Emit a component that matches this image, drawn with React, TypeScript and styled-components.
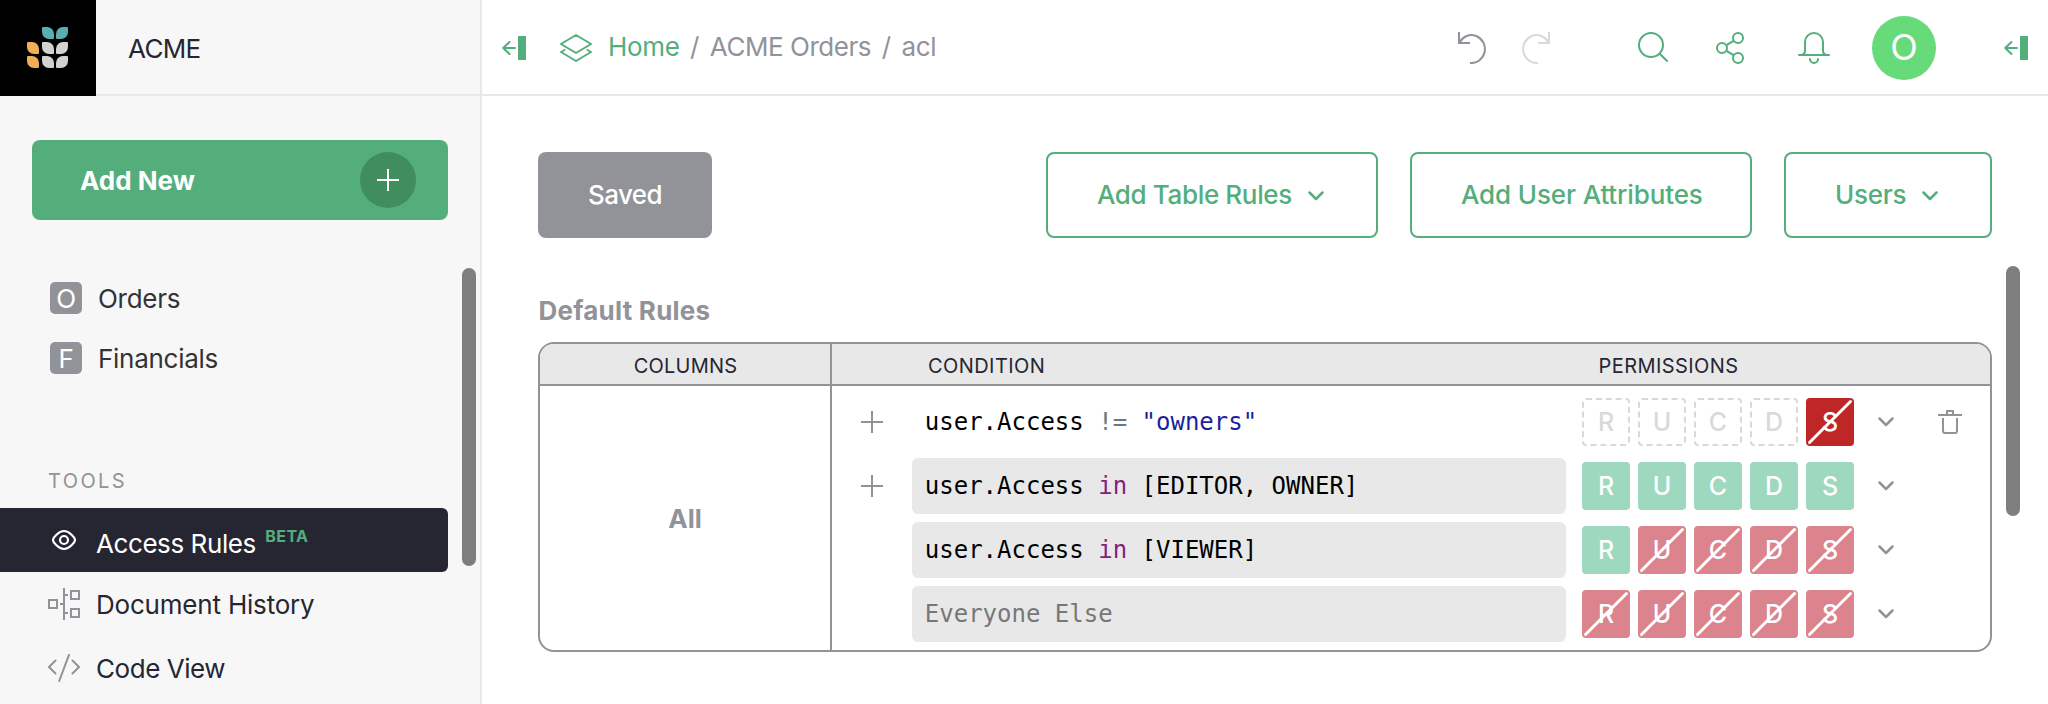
import React from "react";
import styled, { createGlobalStyle } from "styled-components";

const c = {
  green: "#53ae7c",
  greenDark: "#408d5d",
  dark: "#262633",
  slate: "#929299",
  line: "#e8e8e8",
  disabled: "#d9d9d9",
  thumb: "#7e7e7e",
};

const GlobalStyle = createGlobalStyle`
  * { box-sizing: border-box; }
  body { margin: 0; background: #fff; color: ${c.dark}; font: 26px Inter, "Liberation Sans", sans-serif; }
`;

const Page = styled.div`
  display: flex;
  width: 2048px;
  height: 704px;
  overflow: hidden;
`;

/* ---------- sidebar ---------- */

const Sidebar = styled.aside`
  display: flex;
  flex-direction: column;
  width: 482px;
  flex: none;
  background: #f7f7f7;
  border-right: 2px solid ${c.line};
`;

const SidebarHeader = styled.div`
  display: flex;
  height: 96px;
  flex: none;
`;

const LogoBox = styled.div`
  display: flex;
  align-items: center;
  justify-content: center;
  width: 96px;
  background: #000;
`;

const LogoGrid = styled.div`
  display: grid;
  grid-template: repeat(3, 12px) / repeat(3, 12px);
  gap: 2.5px;
  margin-right: 1px;
  margin-bottom: 1px;
`;

const Petal = styled.i<{ $color: string; $flip?: boolean }>`
  background: ${(p) => p.$color};
  border-radius: ${(p) => (p.$flip ? "7px 1px 7px 1px" : "1px 7px 1px 7px")};
`;

const OrgName = styled.div`
  flex: 1;
  padding: 3px 0 0 32px;
  line-height: 91px;
  letter-spacing: -0.65px;
  border-bottom: 2px solid ${c.line};
`;

const AddNewButton = styled.button`
  display: flex;
  align-items: center;
  justify-content: space-between;
  width: 416px;
  height: 80px;
  margin: 44px 0 48px 32px;
  padding: 0 32px 0 48px;
  flex: none;
  border: 0;
  border-radius: 8px;
  background: ${c.green};
  color: #fff;
  font: bold 26px Inter, sans-serif;
  letter-spacing: 0;
`;

const AddCircle = styled.span`
  display: flex;
  align-items: center;
  justify-content: center;
  width: 56px;
  height: 56px;
  border-radius: 50%;
  background: ${c.greenDark};
`;

const SidebarBody = styled.div`
  display: flex;
  flex: 1;
  justify-content: space-between;
  min-height: 0;
`;

const SidebarList = styled.nav`
  width: 448px;
`;

const ScrollThumb = styled.div<{ $height: number }>`
  width: 14px;
  height: ${(p) => p.$height}px;
  border-radius: 7px;
  background: ${c.thumb};
`;

const SidebarThumb = styled(ScrollThumb)`
  margin-right: 4px;
`;

const PageRow = styled.div`
  display: flex;
  align-items: center;
  gap: 16px;
  height: 60px;
  padding-left: 50px;
  color: #333;
  letter-spacing: -0.27px;
`;

const PageLabel = styled.span`
  padding-top: 1px;
`;

const PageBadge = styled.span`
  width: 32px;
  height: 32px;
  border-radius: 5px;
  background: ${c.slate};
  color: #fff;
  line-height: 33px;
  text-align: center;
`;

const SectionTitle = styled.div`
  margin: 80px 0 14px;
  padding-left: 48px;
  font-size: 20px;
  line-height: 26px;
  letter-spacing: 2.4px;
  color: ${c.slate};
`;

const ToolRow = styled.div<{ $active?: boolean }>`
  display: flex;
  align-items: center;
  gap: 16px;
  height: 64px;
  padding-left: 48px;
  border-radius: 0 6px 6px 0;
  background: ${(p) => (p.$active ? c.dark : "transparent")};
  color: ${(p) => (p.$active ? "#fff" : c.dark)};
  svg { color: ${(p) => (p.$active ? "#fff" : c.slate)}; }
`;

const ToolLabel = styled.span<{ $spacing: number; $drop?: number }>`
  letter-spacing: ${(p) => p.$spacing}px;
  padding-top: ${(p) => p.$drop ?? 0}px;
`;

const BetaTag = styled.span`
  margin-left: 9.5px;
  color: ${c.green};
  font-size: 16px;
  font-weight: 700;
  letter-spacing: 0.4px;
  line-height: 0;
  vertical-align: 11px;
`;

/* ---------- main area ---------- */

const Main = styled.main`
  display: flex;
  flex-direction: column;
  flex: 1;
  min-width: 0;
`;

const TopBar = styled.header`
  display: flex;
  align-items: center;
  height: 96px;
  flex: none;
  padding: 2px 20px 0 20px;
  border-bottom: 2px solid ${c.line};
  color: ${c.green};
`;

const Breadcrumbs = styled.div`
  display: flex;
  flex: 1;
  margin-left: 16px;
  padding-bottom: 3px;
  white-space: nowrap;
  color: ${c.slate};
`;

const Crumb = styled.span<{ $link?: boolean; $spacing: number }>`
  color: ${(p) => (p.$link ? c.green : c.slate)};
  letter-spacing: ${(p) => p.$spacing}px;
`;

const Slash = styled.span`
  margin: 0 10.4px 0 10.6px;
`;

const IconSlot = styled.span<{ $left: number; $color?: string }>`
  display: flex;
  margin-left: ${(p) => p.$left}px;
  color: ${(p) => p.$color ?? "inherit"};
`;

const Avatar = styled.div`
  width: 64px;
  height: 64px;
  margin: 0 68px 0 42px;
  border-radius: 50%;
  background: #67da79;
  color: #fff;
  font-size: 36px;
  line-height: 63px;
  text-align: center;
`;

const Content = styled.div`
  display: flex;
  flex-direction: column;
  padding: 56px 28px 0 56px;
`;

const ButtonBar = styled.div`
  display: flex;
  gap: 32px;
  margin-right: 28px;
`;

const OutlineButton = styled.button<{ $width: number; $spacing: number }>`
  display: flex;
  align-items: center;
  justify-content: space-between;
  width: ${(p) => p.$width}px;
  height: 86px;
  padding: 0 0 1px 49px;
  border: 2px solid ${c.green};
  border-radius: 8px;
  background: #fff;
  color: ${c.green};
  font: 500 26px Inter, sans-serif;
  letter-spacing: ${(p) => p.$spacing}px;
  white-space: nowrap;
  svg { margin: 3px 52px 0 0; }
`;

const SavedButton = styled.button`
  width: 174px;
  height: 86px;
  margin-right: auto;
  padding-bottom: 2px;
  border: 0;
  border-radius: 8px;
  background: ${c.slate};
  color: #fff;
  font: 500 26px Inter, sans-serif;
  letter-spacing: -0.54px;
`;

const RulesArea = styled.div`
  display: flex;
  justify-content: space-between;
  margin-top: 28px;
`;

const RulesColumn = styled.section`
  width: 1454px;
`;

const RulesTitle = styled.h2`
  margin: 29px 0 15px;
  padding-left: 0.5px;
  font-size: 26px;
  line-height: 32px;
  font-weight: bold;
  letter-spacing: 0.23px;
  color: ${c.slate};
`;

const RulesTable = styled.div`
  display: grid;
  grid-template-columns: 292px 1fr;
  grid-template-rows: 42px 264px;
  height: 310px;
  border: 2px solid ${c.slate};
  border-radius: 16px;
  overflow: hidden;
`;

const HeadCell = styled.div`
  display: flex;
  align-items: center;
  padding-top: 3px;
  background: #e8e8e8;
  border-bottom: 2px solid ${c.slate};
  font-size: 20px;
  letter-spacing: 0.42px;
`;

const ColumnsHead = styled(HeadCell)`
  justify-content: center;
  padding-left: 1px;
  border-right: 2px solid ${c.slate};
  letter-spacing: 0.2px;
`;

const ConditionHead = styled.span`
  width: 670.5px;
  margin-left: 96px;
`;

const AllCell = styled.div`
  display: flex;
  align-items: center;
  justify-content: center;
  border-right: 2px solid ${c.slate};
  color: ${c.slate};
  font-weight: bold;
`;

const RuleList = styled.div`
  padding-top: 4px;
`;

const RuleRow = styled.div`
  display: flex;
  align-items: center;
  height: 64px;
`;

const AddSlot = styled.span`
  display: flex;
  justify-content: center;
  width: 80px;
  color: ${c.slate};
`;

const Formula = styled.div<{ $readonly?: boolean; $muted?: boolean }>`
  width: 654px;
  height: 56px;
  margin-right: 16px;
  padding-left: 12.8px;
  border-radius: 6px;
  background: ${(p) => (p.$readonly ? "#e8e8e8" : "transparent")};
  color: ${(p) => (p.$muted ? "#777" : "#000")};
  font: 24px/56px "DejaVu Sans Mono", monospace;
  white-space: pre;
`;

const Keyword = styled.span`color: #852080;`;
const Str = styled.span`color: #1b1f9c;`;
const Operator = styled.span`color: #6b7785;`;

const Permissions = styled.div`
  display: flex;
  gap: 8px;
`;

type PermKind = "none" | "allow" | "deny" | "denyStrong";

const permFill: Record<PermKind, string> = {
  none: "transparent",
  allow: "#9ed8be",
  deny: "#db848d",
  denyStrong: "#bf2727",
};

const PermBox = styled.div<{ $kind: PermKind }>`
  position: relative;
  display: flex;
  align-items: center;
  justify-content: center;
  width: 48px;
  height: 48px;
  border: ${(p) => (p.$kind === "none" ? `2px dashed ${c.disabled}` : "0")};
  border-radius: 4px;
  background: ${(p) => permFill[p.$kind]};
  color: ${(p) => (p.$kind === "none" ? c.disabled : "#fff")};
  font-size: 25px;
  font-weight: 500;
`;

const Strike = styled.svg`
  position: absolute;
  inset: 0;
`;

const MenuSlot = styled.span`
  display: flex;
  margin-left: 24px;
  color: ${c.slate};
`;

const TrashSlot = styled(MenuSlot)`
  margin-left: 44px;
`;

/* ---------- icons ---------- */

const svgBase = { fill: "none", stroke: "currentColor", strokeWidth: 2 } as const;

const Plus = () => (
  <svg width="22" height="22" {...svgBase}><path d="M11 0v22M0 11h22" /></svg>
);
const Chevron = () => (
  <svg width="16" height="12" {...svgBase} strokeWidth={2.5} strokeLinecap="round" strokeLinejoin="round">
    <path d="M1.500 2.500 8 9l6.500-6.500" />
  </svg>
);
const PanelToggle = () => (
  <svg width="24" height="24" {...svgBase} strokeLinecap="round" strokeLinejoin="round">
    <path d="M13 12H1.200M7.500 6 1.200 12l6.300 6" />
    <rect x="16" y="0" width="8" height="24" rx="0.5" fill="currentColor" stroke="none" />
  </svg>
);
const Layers = () => (
  <svg width="32" height="28" {...svgBase} strokeLinejoin="round" strokeLinecap="round">
    <path d="M16 1 31 10 16 19 1 10ZM4.500 16 1 18l15 9 15-9-3.500-2" />
  </svg>
);
const Undo = () => (
  <svg width="28" height="32" {...svgBase}>
    <path d="M1 0v11h11M1.500 10.500A13.500 14 0 1 1 12 31" />
  </svg>
);
const Redo = () => (
  <svg width="28" height="32" {...svgBase}>
    <path d="M27 0v11H16M26.500 10.500A13.500 14 0 1 0 16 31" />
  </svg>
);
const Search = () => (
  <svg width="32" height="32" {...svgBase} strokeLinecap="round">
    <circle cx="13" cy="13" r="12" /><path d="m22 22 7 7" />
  </svg>
);
const Share = () => (
  <svg width="32" height="32" {...svgBase}>
    <circle cx="8" cy="16" r="5" /><circle cx="24" cy="6" r="5" /><circle cx="24" cy="26" r="5" />
    <path d="m12.500 13.200 7-4.400M12.500 18.800l7 4.400" />
  </svg>
);
const Bell = () => (
  <svg width="32" height="32" {...svgBase} strokeLinecap="round">
    <path d="M1 23h30M3.500 23C6 22.500 7 21.500 7 19v-9a9 9 0 0 1 18 0v9c0 2.500 1 3.500 3.500 4M12 27a4 4 0 0 0 8 0" />
  </svg>
);
const Eye = () => (
  <svg width="32" height="24" {...svgBase} strokeWidth={2.2}>
    <path d="M5 12C5 10 10.500 3 16 3s11 7 11 9-5.500 9-11 9S5 14 5 12Z" />
    <circle cx="16" cy="12" r="4" />
  </svg>
);
const History = () => (
  <svg width="32" height="32" {...svgBase}>
    <path d="M1 12h8v8H1zM23 3h8v8h-8zM23 21h8v8h-8zM16 0v32M12 16h4M16 7h4M16 25h4" />
  </svg>
);
const Code = () => (
  <svg width="32" height="28" {...svgBase} strokeLinecap="round" strokeLinejoin="round">
    <path d="M7.500 6.500 1 13l6.500 6.500M24.500 6.500 31 13l-6.500 6.500M21 .8 11.200 27" />
  </svg>
);
const Trash = () => (
  <svg width="24" height="24" {...svgBase} strokeLinejoin="round">
    <path d="M0 5h24M9 5V1h6v4M5 8v13a2 2 0 0 0 2 2h10a2 2 0 0 0 2-2V8" />
  </svg>
);

/* ---------- data ---------- */

const teal = "#57afb0";
const amber = "#f0af56";
const silver = "#d2d2d2";
const petals = ["transparent", teal, teal, amber, silver, silver, amber, silver, silver];
const letters = ["R", "U", "C", "D", "S"];

interface Rule {
  formula: React.ReactNode;
  readonly?: boolean;
  muted?: boolean;
  add?: boolean;
  trash?: boolean;
  perms: PermKind[];
}

const rules: Rule[] = [
  {
    formula: <>user.Access <Operator>!=</Operator> <Str>"owners"</Str></>,
    add: true,
    trash: true,
    perms: ["none", "none", "none", "none", "denyStrong"],
  },
  {
    formula: <>user.Access <Keyword>in</Keyword> [EDITOR, OWNER]</>,
    add: true,
    readonly: true,
    perms: ["allow", "allow", "allow", "allow", "allow"],
  },
  {
    formula: <>user.Access <Keyword>in</Keyword> [VIEWER]</>,
    readonly: true,
    perms: ["allow", "deny", "deny", "deny", "deny"],
  },
  {
    formula: "Everyone Else",
    readonly: true,
    muted: true,
    perms: ["deny", "deny", "deny", "deny", "deny"],
  },
];

const Permission = ({ letter, kind }: { letter: string; kind: PermKind }) => (
  <PermBox $kind={kind}>
    {letter}
    {(kind === "deny" || kind === "denyStrong") && (
      <Strike width="48" height="48">
        <path d="M3.500 44.500 44.500 3.500" stroke="#fff" strokeWidth="3" strokeLinecap="round" />
      </Strike>
    )}
  </PermBox>
);

export default function App() {
  return (
    <Page>
      <GlobalStyle />
      <Sidebar>
        <SidebarHeader>
          <LogoBox>
            <LogoGrid>
              {petals.map((color, i) => <Petal key={i} $color={color} $flip={i % 3 === 2} />)}
            </LogoGrid>
          </LogoBox>
          <OrgName>ACME</OrgName>
        </SidebarHeader>
        <AddNewButton>
          Add New
          <AddCircle><Plus /></AddCircle>
        </AddNewButton>
        <SidebarBody>
          <SidebarList>
            <PageRow><PageBadge>O</PageBadge><PageLabel>Orders</PageLabel></PageRow>
            <PageRow><PageBadge>F</PageBadge><PageLabel>Financials</PageLabel></PageRow>
            <SectionTitle>TOOLS</SectionTitle>
            <ToolRow $active>
              <Eye />
              <ToolLabel $spacing={-0.42} $drop={6}>Access Rules<BetaTag>BETA</BetaTag></ToolLabel>
            </ToolRow>
            <ToolRow><History /><ToolLabel $spacing={-0.2} $drop={1}>Document History</ToolLabel></ToolRow>
            <ToolRow><Code /><ToolLabel $spacing={-0.45} $drop={1}>Code View</ToolLabel></ToolRow>
          </SidebarList>
          <SidebarThumb $height={298} />
        </SidebarBody>
      </Sidebar>
      <Main>
        <TopBar>
          <PanelToggle />
          <IconSlot $left={34}><Layers /></IconSlot>
          <Breadcrumbs>
            <Crumb $link $spacing={-0.35}>Home</Crumb>
            <Slash>/</Slash>
            <Crumb $spacing={-0.46}>ACME Orders</Crumb>
            <Slash>/</Slash>
            <Crumb $spacing={-0.3}>acl</Crumb>
          </Breadcrumbs>
          <IconSlot $left={0} $color={c.slate}><Undo /></IconSlot>
          <IconSlot $left={36} $color={c.disabled}><Redo /></IconSlot>
          <IconSlot $left={88}><Search /></IconSlot>
          <IconSlot $left={44}><Share /></IconSlot>
          <IconSlot $left={52}><Bell /></IconSlot>
          <Avatar>O</Avatar>
          <PanelToggle />
        </TopBar>
        <Content>
          <ButtonBar>
            <SavedButton>Saved</SavedButton>
            <OutlineButton $width={332} $spacing={-0.36}>Add Table Rules<Chevron /></OutlineButton>
            <OutlineButton $width={342} $spacing={-0.13}>Add User Attributes</OutlineButton>
            <OutlineButton $width={208} $spacing={-0.24}>Users<Chevron /></OutlineButton>
          </ButtonBar>
          <RulesArea>
            <RulesColumn>
              <RulesTitle>Default Rules</RulesTitle>
              <RulesTable>
                <ColumnsHead>COLUMNS</ColumnsHead>
                <HeadCell>
                  <ConditionHead>CONDITION</ConditionHead>
                  PERMISSIONS
                </HeadCell>
                <AllCell>All</AllCell>
                <RuleList>
                  {rules.map((rule, i) => (
                    <RuleRow key={i}>
                      <AddSlot>{rule.add && <Plus />}</AddSlot>
                      <Formula $readonly={rule.readonly} $muted={rule.muted}>{rule.formula}</Formula>
                      <Permissions>
                        {rule.perms.map((kind, k) => <Permission key={k} letter={letters[k]} kind={kind} />)}
                      </Permissions>
                      <MenuSlot><Chevron /></MenuSlot>
                      {rule.trash && <TrashSlot><Trash /></TrashSlot>}
                    </RuleRow>
                  ))}
                </RuleList>
              </RulesTable>
            </RulesColumn>
            <ScrollThumb $height={250} />
          </RulesArea>
        </Content>
      </Main>
    </Page>
  );
}
